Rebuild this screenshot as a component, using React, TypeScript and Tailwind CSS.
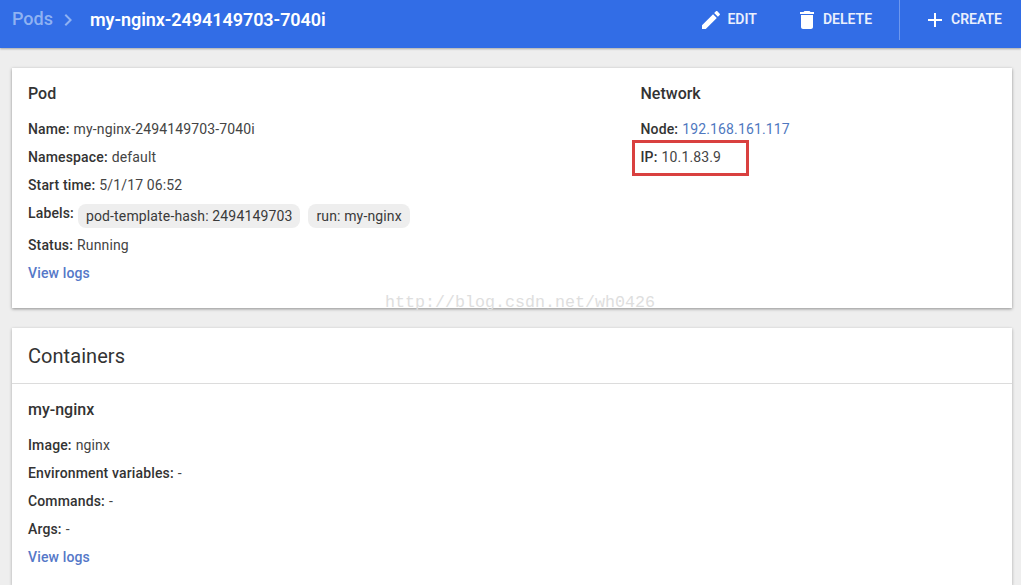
const font = "[font-family:Roboto,'Liberation_Sans',sans-serif]"

function Icon({ d, className }: { d: string; className: string }) {
  return (
    <svg viewBox="0 0 24 24" fill="currentColor" className={className}>
      <path d={d} />
    </svg>
  )
}

function Row({ label, children }: { label: string; children?: React.ReactNode }) {
  return (
    <div className="h-[28px] flex items-center text-[14px] tracking-[0.14px] text-[#333333]">
      <span className="font-medium">{label}:</span>
      <span className="ml-[4px] text-[#444444]">{children}</span>
    </div>
  )
}

function Chip({ children }: { children: React.ReactNode }) {
  return (
    <span className="h-[24px] px-[8px] flex items-center rounded-[8px] bg-[#eeeeee] text-[14px] tracking-[0.14px] text-[#3a3a3a]">
      {children}
    </span>
  )
}

function ViewLogs() {
  return <div className="h-[28px] flex items-center text-[14px] tracking-[0.14px] font-medium text-[#5578c8]">View logs</div>
}

function Toolbar() {
  return (
    <header className="h-[48px] shrink-0 bg-[#326de6] flex items-start justify-between shadow-[0_1px_2px_rgba(0,0,0,0.3)] text-white">
      <div className="flex items-center h-[39px] pl-[12px] text-[18px] font-medium">
        <span className="text-[#8fb2f2] pb-[2px]">Pods</span>
        <Icon d="M10 6L8.59 7.41 13.17 12l-4.58 4.59L10 18l6-6z" className="w-[24px] h-[24px] ml-[3px] text-[#8fb2f2]" />
        <span className="ml-[10px] font-semibold tracking-[-0.06px]">my-nginx-2494149703-7040i</span>
      </div>
      <div className="flex items-start text-[14px] font-semibold text-[#eaf0fd]">
        <div className="flex items-center h-[40px]">
          <Icon
            d="M3 17.25V21h3.75L17.81 9.94l-3.75-3.75L3 17.25zM20.71 7.04c.39-.39.39-1.02 0-1.41l-2.34-2.34c-.39-.39-1.02-.39-1.41 0l-1.83 1.83 3.75 3.75 1.83-1.83z"
            className="w-[24px] h-[24px] text-white"
          />
          <span className="ml-[4px] pb-[2px]">EDIT</span>
          <Icon
            d="M6 19c0 1.1.9 2 2 2h8c1.1 0 2-.9 2-2V7H6v12zM19 4h-3.5l-1-1h-5l-1 1H5v2h14V4z"
            className="w-[24px] h-[24px] ml-[38px] text-white"
          />
          <span className="ml-[4px] pb-[2px]">DELETE</span>
        </div>
        <div className="ml-[27px] h-[40px] w-px bg-[#6d97ee]" />
        <div className="flex items-center h-[40px] pl-[23px] pr-[19px]">
          <Icon d="M19 13h-6v6h-2v-6H5v-2h6V5h2v6h6v2z" className="w-[24px] h-[24px] text-white" />
          <span className="ml-[4px] pb-[2px]">CREATE</span>
        </div>
      </div>
    </header>
  )
}

function PodCard() {
  return (
    <section className="relative h-[240px] bg-white shadow-[0_1px_3px_rgba(0,0,0,0.4)] px-[16px] pt-[14px] flex">
      <div className="w-[612.5px]">
        <h2 className="h-[24px] flex items-center text-[16px] font-medium text-[#333333] mb-[9px]">Pod</h2>
        <Row label="Name">my-nginx-2494149703-7040i</Row>
        <Row label="Namespace">default</Row>
        <Row label="Start time">5/1/17 06:52</Row>
        <div className="h-[32px] flex items-start text-[14px] tracking-[0.14px] text-[#333333]">
          <span className="font-medium mt-[4px]">Labels:</span>
          <div className="ml-[4px] mt-[5px] flex gap-[8px]">
            <Chip>pod-template-hash: 2494149703</Chip>
            <Chip>run: my-nginx</Chip>
          </div>
        </div>
        <Row label="Status">Running</Row>
        <ViewLogs />
      </div>
      <div>
        <h2 className="h-[24px] flex items-center text-[16px] font-medium text-[#333333] mb-[9px]">Network</h2>
        <Row label="Node">
          <span className="text-[#4f78c0]">192.168.161.117</span>
        </Row>
        <Row label="IP">10.1.83.9</Row>
      </div>
    </section>
  )
}

function ContainersCard() {
  return (
    <section className="flex-1 bg-white shadow-[0_1px_3px_rgba(0,0,0,0.3)]">
      <div className="h-[56px] flex items-center px-[16px] border-b border-[#dcdcdc] text-[20px] tracking-[0.05px] text-[#333333]">
        Containers
      </div>
      <div className="px-[16px] pt-[14px]">
        <h3 className="h-[24px] flex items-center text-[16px] font-medium text-[#333333] mb-[9px]">my-nginx</h3>
        <Row label="Image">nginx</Row>
        <Row label="Environment variables">-</Row>
        <Row label="Commands">-</Row>
        <Row label="Args">-</Row>
        <ViewLogs />
      </div>
    </section>
  )
}

export default function App() {
  return (
    <div className={`relative w-[1021px] h-[585px] overflow-hidden bg-[#eeeeee] flex flex-col ${font}`}>
      <Toolbar />
      <main className="flex-1 flex flex-col gap-[20px] pt-[20px] pl-[12px] pr-[9px]">
        <PodCard />
        <ContainersCard />
      </main>
      {/* annotation + watermark on top of the screenshot */}
      <div className="absolute left-[632px] top-[140px] w-[117px] h-[36px] border-[3px] border-[#d9403f]" />
      <div className="absolute left-[385px] top-[293px] text-[16.67px] leading-[20px] text-[#dedede] [font-family:'Liberation_Mono',monospace] whitespace-nowrap">
        http://blog.csdn.net/wh0426
      </div>
    </div>
  )
}
